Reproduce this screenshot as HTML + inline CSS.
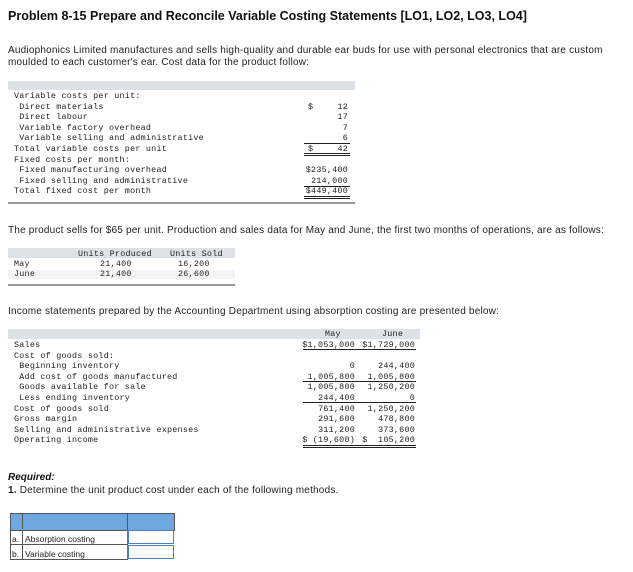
<!DOCTYPE html><html><head><style>
body{margin:0;width:633px;height:572px;background:#fff;position:relative;overflow:hidden;font-family:"Liberation Sans",Arial,sans-serif;color:#111}
.a{position:absolute;white-space:nowrap}
.m{font-family:"Liberation Mono",monospace;font-size:8.4px;letter-spacing:0.25px;color:#222;line-height:10px}
.r{text-align:right}
.band{position:absolute;background:#dde1e8}
.sh{position:absolute;background:#f3f3f3}
.ln{position:absolute;height:1px;background:#222}
.p{font-size:10px;letter-spacing:0.2px;color:#222}
</style></head><body>
<div class="a" style="left:8px;top:9px;font-size:12.5px;font-weight:bold">Problem 8-15 Prepare and Reconcile Variable Costing Statements [LO1, LO2, LO3, LO4]</div>
<div class="a p" style="left:8px;top:45px;line-height:12px">Audiophonics Limited manufactures and sells high-quality and durable ear buds for use with personal electronics that are custom<br>moulded to each customer's ear. Cost data for the product follow:</div>

<div class="band" style="left:8px;top:81px;width:347px;height:9px"></div>
<div class="a m" style="left:14px;top:91px;line-height:10.6px">Variable costs per unit:<br>&nbsp;Direct materials<br>&nbsp;Direct labour<br>&nbsp;Variable factory overhead<br>&nbsp;Variable selling and administrative<br>Total variable costs per unit<br>Fixed costs per month:<br>&nbsp;Fixed manufacturing overhead<br>&nbsp;Fixed selling and administrative<br>Total fixed cost per month</div>
<div class="a m" style="left:308px;top:101.6px">$</div>
<div class="a m r" style="left:300px;width:48px;top:101.6px;line-height:10.6px">12<br>17<br>7<br>6</div>
<div class="ln" style="left:304px;top:143px;width:46px"></div>
<div class="a m" style="left:308px;top:144px">$</div>
<div class="a m r" style="left:300px;width:48px;top:144px">42</div>
<div class="ln" style="left:304px;top:153px;width:46px"></div><div class="ln" style="left:304px;top:155px;width:46px"></div>
<div class="a m r" style="left:300px;width:48px;top:165px;line-height:10.6px">$235,400<br>214,000</div>
<div class="ln" style="left:304px;top:186px;width:46px"></div>
<div class="a m r" style="left:300px;width:48px;top:186px">$449,400</div>
<div class="ln" style="left:304px;top:196px;width:46px"></div><div class="ln" style="left:304px;top:198px;width:46px"></div>
<div class="a" style="left:8px;top:202px;width:347px;height:2px;background:#999"></div>

<div class="a p" style="left:8px;top:225px">The product sells for $65 per unit. Production and sales data for May and June, the first two months of operations, are as follows:</div>
<div class="band" style="left:8px;top:248px;width:227px;height:10px"></div>
<div class="sh" style="left:8px;top:270px;width:227px;height:9px"></div>
<div class="a m" style="left:78px;top:249px">Units Produced</div>
<div class="a m" style="left:170px;top:249px">Units Sold</div>
<div class="a m" style="left:14px;top:259px;line-height:10px">May<br>June</div>
<div class="a m" style="left:100px;top:259px;line-height:10px">21,400<br>21,400</div>
<div class="a m" style="left:178px;top:259px;line-height:10px">16,200<br>26,600</div>
<div class="a" style="left:8px;top:284px;width:227px;height:2px;background:#999"></div>

<div class="a p" style="left:8px;top:306px">Income statements prepared by the Accounting Department using absorption costing are presented below:</div>
<div class="band" style="left:8px;top:329px;width:412px;height:10px"></div>
<div class="a m" style="left:325px;top:329px">May</div>
<div class="a m" style="left:382px;top:329px">June</div>
<div class="a m" style="left:14px;top:340px;line-height:10.6px">Sales<br>Cost of goods sold:<br>&nbsp;Beginning inventory<br>&nbsp;Add cost of goods manufactured<br>&nbsp;Goods available for sale<br>&nbsp;Less ending inventory<br>Cost of goods sold<br>Gross margin<br>Selling and administrative expenses<br>Operating income</div>
<div class="a m r" style="left:290px;width:65px;top:340px;line-height:10.6px">$1,053,000<br>&nbsp;<br>0<br>1,005,800<br>1,005,800<br>244,400<br>761,400<br>291,600<br>311,200<br>$&nbsp;(19,600)</div>
<div class="a m r" style="left:350px;width:65px;top:340px;line-height:10.6px">$1,729,000<br>&nbsp;<br>244,400<br>1,005,800<br>1,250,200<br>0<br>1,250,200<br>478,800<br>373,600<br>$&nbsp;&nbsp;105,200</div>
<div class="ln" style="left:303px;top:349px;width:113px"></div>
<div class="ln" style="left:303px;top:381px;width:113px"></div>
<div class="ln" style="left:303px;top:402px;width:113px"></div>
<div class="ln" style="left:303px;top:445px;width:113px"></div><div class="ln" style="left:303px;top:447px;width:113px"></div>

<div class="a" style="left:8px;top:472px;font-size:10px;font-weight:bold;font-style:italic">Required:</div>
<div class="a p" style="left:8px;top:485px"><b>1.</b> Determine the unit product cost under each of the following methods.</div>

<div class="a" style="left:10px;top:513px;width:116px;height:16px;background:#6fa8e0;border:1px solid #555"></div>
<div class="a" style="left:10px;top:513px;width:12px;height:16px;border-right:1px solid #555"></div>
<div class="a" style="left:127px;top:513px;width:46px;height:16px;background:#6fa8e0;border:1px solid #555"></div>
<div class="a" style="left:10px;top:530px;width:116px;height:29px;border:1px solid #555;border-top:none"></div>
<div class="a" style="left:10px;top:544px;width:117px;height:1px;background:#555"></div>
<div class="a" style="left:22px;top:530px;width:1px;height:30px;background:#555"></div>
<div class="a" style="left:12px;top:532px;font-size:8.5px;line-height:15px;color:#222">a.<br>b.</div>
<div class="a" style="left:25px;top:532px;font-size:8.5px;line-height:15px;color:#222">Absorption costing<br>Variable costing</div>
<div class="a" style="left:127px;top:530px;width:44px;height:12px;border:1px solid #4a7fc0;border-left:2px solid #4a7fc0"></div>
<div class="a" style="left:127px;top:545px;width:44px;height:12px;border:1px solid #4a7fc0;border-left:2px solid #4a7fc0"></div>
</body></html>
